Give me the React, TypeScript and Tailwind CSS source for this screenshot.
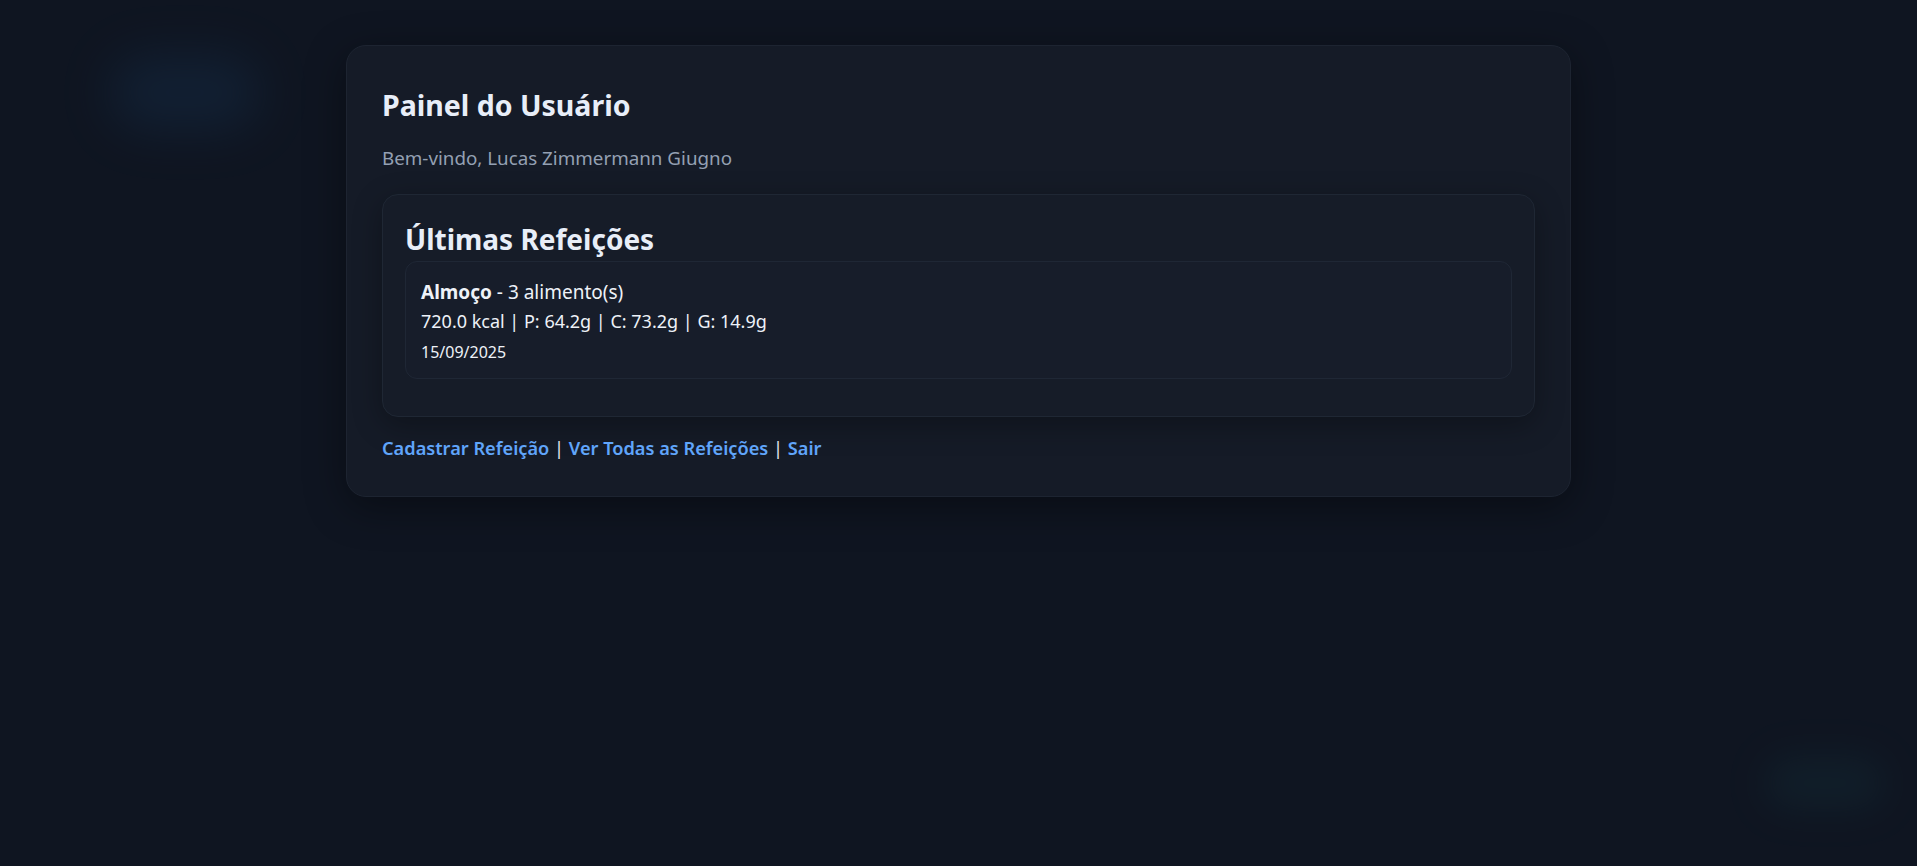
import React from "react";

type Meal = {
  name: string;
  foods: number;
  kcal: number;
  p: number;
  c: number;
  g: number;
  date: string;
};

const meals: Meal[] = [
  { name: "Almoço", foods: 3, kcal: 720.0, p: 64.2, c: 73.2, g: 14.9, date: "15/09/2025" },
];

export default function App() {
  return (
    <div className="relative min-h-screen overflow-hidden bg-[#0f1521] pt-[45px] font-['Noto_Sans',sans-serif] text-[#e5ebf4]">
      {/* glows in the background */}
      <div className="pointer-events-none absolute left-[110px] top-[55px] h-[75px] w-[150px] rounded-full bg-[#16304d] opacity-40 blur-[24px]" />
      <div className="pointer-events-none absolute left-[1765px] top-[757px] h-[52px] w-[120px] rounded-full bg-[#15303a] opacity-35 blur-[18px]" />

      <div className="relative mx-auto w-[1225px] rounded-[20px] border border-[#1d2431] bg-[#151b27] px-[35px] pt-[41px] pb-[34px] shadow-[0_10px_40px_rgba(0,0,0,0.4)]">
        {/* Heading */}
        <h1 className="text-[28.5px] font-bold leading-[36px] text-[#e8eef8]">Painel do Usuário</h1>
        <p className="mt-[21px] text-[18.8px] leading-[28px] text-[#94a0b3]">
          Bem-vindo, Lucas Zimmermann Giugno
        </p>

        {/* Latest meals */}
        <section className="mt-[22px] rounded-[16px] border border-[#1f2734] bg-[#161c28] px-[22px] pt-[26px] pb-[37px] shadow-[0_8px_30px_rgba(0,0,0,0.3)]">
          <h2 className="text-[28px] font-bold leading-[36px] text-[#e8eef8]">Últimas Refeições</h2>
          <ul className="mt-1 flex flex-col gap-3">
            {meals.map((m, i) => (
              <li
                key={i}
                className="rounded-[12px] border border-[#1f2735] bg-[#171d2a] px-[15px] pt-[16px] pb-[14px] text-[#eef2f8]"
              >
                <div className="text-[19px] leading-[29px]">
                  <strong className="font-bold">{m.name}</strong> - {m.foods} alimento(s)
                </div>
                <div className="text-[18px] leading-[29px]">
                  {m.kcal.toFixed(1)} kcal | P: {m.p.toFixed(1)}g | C: {m.c.toFixed(1)}g | G: {m.g.toFixed(1)}g
                </div>
                <div className="mt-[4px] text-[16px] leading-[24px]">{m.date}</div>
              </li>
            ))}
          </ul>
        </section>

        {/* Links */}
        <nav className="mt-[17px] text-[18.2px] leading-[28px] text-[#e5e7eb]">
          <a href="#" className="font-semibold text-[#60a5fa]">Cadastrar Refeição</a>
          {" | "}
          <a href="#" className="font-semibold text-[#60a5fa]">Ver Todas as Refeições</a>
          {" | "}
          <a href="#" className="font-semibold text-[#60a5fa]">Sair</a>
        </nav>
      </div>
    </div>
  );
}
